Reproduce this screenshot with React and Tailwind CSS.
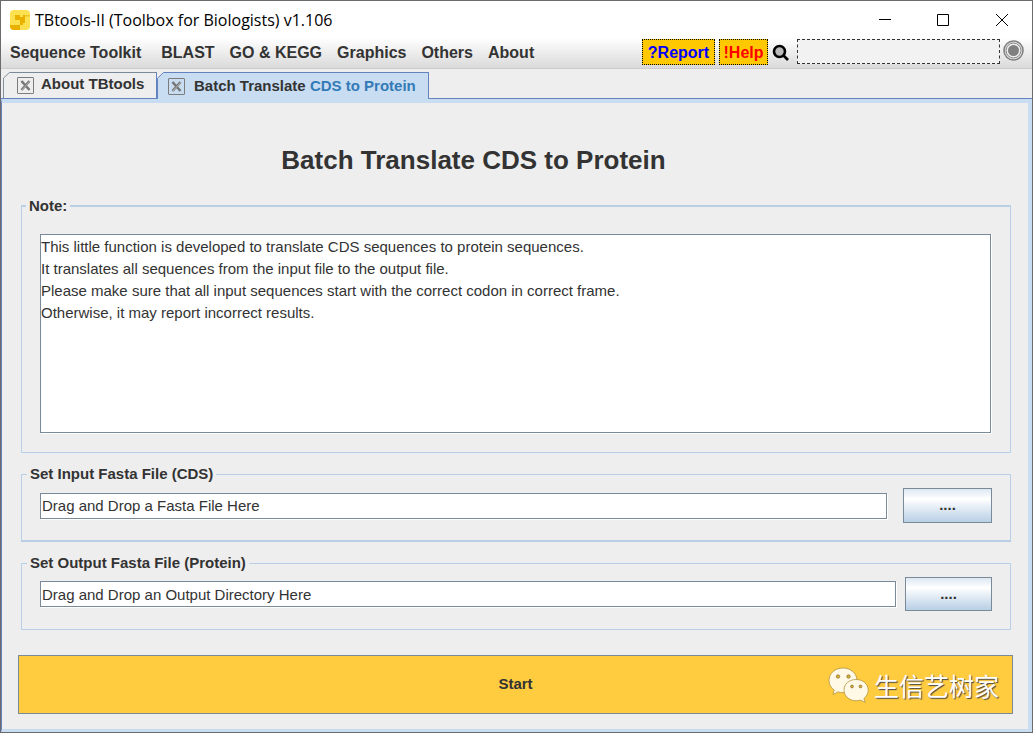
const menus = ["BLAST", "GO & KEGG", "Graphics", "Others", "About"];

function Logo() {
  return (
    <svg viewBox="0 0 20 20" className="size-5 shrink-0" aria-hidden="true">
      <rect width="20" height="20" rx="4" fill="#fbe04f" />
      <path d="M5 5h5v2h3V5h2v8h-2v2h-3v5H4a4 4 0 0 1-4-4v-1h10v-5H5z" fill="#eab000" />
      <path d="M15 5h5v1.500h-5z" fill="#f3c52a" />
    </svg>
  );
}

function CloseTab({ label }) {
  return (
    <button aria-label={label} className="flex size-[17px] shrink-0 items-center justify-center rounded-[1px] border border-[#7c7c7c]">
      <svg viewBox="0 0 11 11" className="size-[11px]" aria-hidden="true">
        <path d="M1.500 1l8 9M9.500 1l-8 9" stroke="#777" strokeWidth="2.600" />
        <path d="M2 10l7.500-8.500" stroke="#eee" strokeWidth="0.500" />
      </svg>
    </button>
  );
}

function TabCorner({ fill, stroke }) {
  return (
    <svg viewBox="0 0 7 28" className="h-full w-[7px] shrink-0" preserveAspectRatio="none" aria-hidden="true">
      <path d="M0.500 28V6.500L6.500 0.500H7V28z" fill={fill} />
      <path d="M0.500 28V6.500L6.500 0.500H7" fill="none" stroke={stroke} />
    </svg>
  );
}

function FileField({ id, legend, value, frameClass, rowClass, buttonClass }) {
  return (
    <fieldset className={`mt-[11px] min-w-0 border border-[#b8cfe5] px-[18px] ${frameClass}`}>
      <legend className="-ml-[13px] px-[3px] text-[15px] leading-5 font-bold">
        <label htmlFor={id}>{legend}</label>
      </legend>
      <div className={`flex items-center pt-1 ${rowClass}`}>
        <input
          id={id}
          defaultValue={value}
          className="h-[26px] min-w-0 flex-1 border border-[#7a8a99] bg-white px-px text-[15px] shadow-[1px_1px_0_#fff] outline-none"
        />
        <button
          aria-label={`Browse: ${legend}`}
          className={`border border-[#7a8a99] bg-linear-to-b from-[#dde8f3] via-white via-30% to-[#b8cfe5] text-[15px] font-bold ${buttonClass}`}
        >
          ....
        </button>
      </div>
    </fieldset>
  );
}

function WeChatMark() {
  return (
    <svg viewBox="0 0 42 36" className="h-9 w-[42px]" aria-hidden="true">
      <g fill="#fff9e6" stroke="#a88a35" strokeWidth="0.700">
        <path d="M15 1C7 1 1 6.500 1 13.500c0 4 2 7.300 5.200 9.600L5 27.500l5-2.600c1.600.5 3.300.7 5 .7 8 0 14-5.300 14-12.100S23 1 15 1z" />
        <path d="M28 12.500c-7 0-12 4.700-12 10.600s5.200 10.700 12 10.700c1.500 0 3-.2 4.400-.7l4.800 2.400-1.300-4c2.600-2 4.300-5 4.300-8.400 0-5.900-5.200-10.600-12.200-10.600z" />
      </g>
      <g fill="#e0b030" stroke="#6d5a22" strokeWidth="0.600">
        <circle cx="10" cy="9.500" r="1.700" />
        <circle cx="20.500" cy="9.500" r="1.700" />
        <circle cx="24" cy="19.500" r="1.400" />
        <circle cx="32.500" cy="19.500" r="1.400" />
      </g>
    </svg>
  );
}

export default function App() {
  return (
    <div className="flex min-h-screen flex-col border border-[#6b6b6d] bg-[#eeeeee] font-['Liberation_Sans',Arial,sans-serif] text-[#333]">
      <header className="flex h-[37px] items-center bg-white pl-[9px]">
        <Logo />
        <span className="ml-[5px] flex-1 font-['Open_Sans','Noto_Sans',sans-serif] text-[16px] text-black">
          TBtools-II (Toolbox for Biologists) v1.106
        </span>
        <div className="flex text-black">
          <button aria-label="Minimize" className="flex h-9 w-[58px] items-center justify-center">
            <svg viewBox="0 0 12 12" className="size-3" aria-hidden="true"><path d="M0 5.500h12" stroke="currentColor" /></svg>
          </button>
          <button aria-label="Maximize" className="flex h-9 w-[58px] items-center justify-center">
            <svg viewBox="0 0 12 12" className="size-3" aria-hidden="true"><path d="M.5.500h11v11H.5z" fill="none" stroke="currentColor" /></svg>
          </button>
          <button aria-label="Close" className="flex h-9 w-[60px] items-center justify-center">
            <svg viewBox="0 0 12 12" className="size-3" aria-hidden="true"><path d="M0 0l12 12M12 0L0 12" stroke="currentColor" /></svg>
          </button>
        </div>
      </header>

      <nav className="flex h-[31px] items-start border-b border-[#cccccc] bg-linear-to-b from-white to-[#dadada] pt-px pr-2 pl-[9px] text-[16px] font-bold">
        <div className="flex h-7 flex-1 items-center gap-[15px]">
          <button className="mr-[5px]">Sequence Toolkit</button>
          {menus.map((m) => (
            <button key={m}>{m}</button>
          ))}
        </div>
        <button className="h-[26px] w-[73px] border border-dotted border-black bg-[#ffc800] pt-px text-[#0000ff]">?Report</button>
        <button className="ml-1 h-[26px] w-[49px] border border-dotted border-black bg-[#ffc800] pt-px text-[#ff0000]">!Help</button>
        <label htmlFor="search" aria-label="Search" className="ml-1 flex h-[26px] w-[25px] items-center">
          <svg viewBox="0 0 17 17" className="size-[17px]" aria-hidden="true">
            <circle cx="7.500" cy="7.500" r="5.500" fill="#bbb" stroke="#000" strokeWidth="2.600" />
            <path d="M11 11l5 5" stroke="#000" strokeWidth="2.600" />
          </svg>
        </label>
        <input id="search" className="h-[25px] w-[203px] border border-dashed border-[#333] bg-[#f2f2f2] px-1 outline-none" />
        <button aria-label="Status" className="ml-[3px] flex h-[23px] items-center">
          <svg viewBox="0 0 21 21" className="size-[21px]" aria-hidden="true">
            <circle cx="10.500" cy="10.500" r="9.500" fill="#eee" stroke="#808080" strokeWidth="1.600" />
            <circle cx="10.500" cy="10.500" r="7.500" fill="none" stroke="#808080" strokeWidth="1" />
            <circle cx="10.500" cy="10.500" r="5.500" fill="#808080" />
          </svg>
        </button>
      </nav>

      <div className="flex h-[30px] items-stretch border-b border-[#6382bf] pt-[3px] pl-[2px] text-[15px] font-bold">
        <div className="flex w-[154px]">
          <TabCorner fill="#eeeeee" stroke="#7a8a99" />
          <div className="flex flex-1 items-center border-t border-r border-t-[#7a8a99] border-r-[#6382bf] pl-[7px]">
            <CloseTab label="Close About TBtools" />
            <button className="mb-[3px] ml-[7px] whitespace-nowrap">About TBtools</button>
          </div>
        </div>
        <div className="-mb-px flex w-[272px]">
          <TabCorner fill="#c8ddf2" stroke="#6382bf" />
          <div className="flex flex-1 items-center border-t border-r border-[#6382bf] bg-[#c8ddf2] pl-[4px]">
            <CloseTab label="Close Batch Translate CDS to Protein" />
            <button className="ml-[9px] whitespace-nowrap">
              Batch Translate <span className="text-[#337ab7]">CDS to Protein</span>
            </button>
          </div>
        </div>
      </div>

      <main className="flex flex-1 flex-col border-t-4 border-r-4 border-b-[3px] border-l border-t-[#c8ddf2] border-r-[#c8ddf2] border-b-[#c8ddf2] border-l-[#6382bf] pr-[15px] pb-[15px] pl-4">
        <h1 className="mt-[41px] mb-5 pr-[84px] text-center text-[26px] leading-8 font-bold">Batch Translate CDS to Protein</h1>

        <div className="pr-[2px] pl-[3px]">
          <fieldset className="min-w-0 border border-t-2 border-[#b8cfe5] pr-[19px] pb-[19px] pl-[18px]">
            <legend className="-ml-[14px] px-[3px] text-[15px] leading-5 font-bold">
              <label htmlFor="note">Note:</label>
            </legend>
            <textarea
              id="note"
              readOnly
              className="mt-[18px] block h-[199px] w-full resize-none overflow-hidden border border-[#7a8a99] bg-white pt-px text-[15px] leading-[22px] shadow-[1px_1px_0_#fff] outline-none"
              value={
                "This little function is developed to translate CDS sequences to protein sequences.\nIt translates all sequences from the input file to the output file.\nPlease make sure that all input sequences start with the correct codon in correct frame.\nOtherwise, it may report incorrect results."
              }
            />
          </fieldset>

          <FileField
            id="cds"
            legend="Set Input Fasta File (CDS)"
            value="Drag and Drop a Fasta File Here"
            frameClass="border-b-2 pb-[17px]"
            rowClass="gap-4"
            buttonClass="h-[35px] w-[89px]"
          />
          <FileField
            id="protein"
            legend="Set Output Fasta File (Protein)"
            value="Drag and Drop an Output Directory Here"
            frameClass="pb-[18px]"
            rowClass="gap-[9px]"
            buttonClass="h-[34px] w-[87px]"
          />
        </div>

        <div className="relative mt-[25px] flex min-h-[59px] flex-1">
          <button className="flex-1 border border-[#7a8a99] bg-[#ffcc40] text-[15px] font-bold">
            Start
          </button>
          <div className="pointer-events-none absolute right-[14px] bottom-[11px] flex items-center gap-1">
            <WeChatMark />
            <span className="font-['Noto_Sans_CJK_SC',sans-serif] text-[25px] leading-9 text-white [text-shadow:1px_1px_1px_#444]">
              生信艺树家
            </span>
          </div>
        </div>
      </main>
    </div>
  );
}
